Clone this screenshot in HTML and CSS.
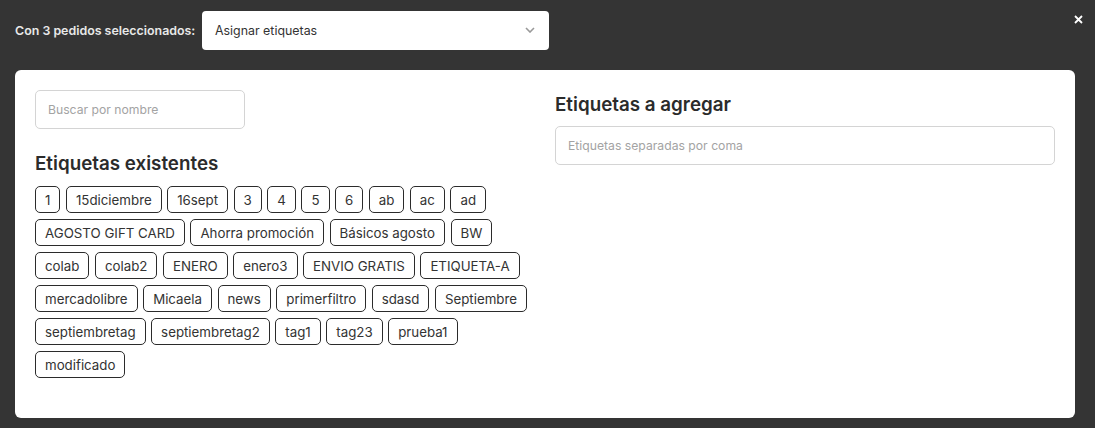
FILE: index.html
```html
<!DOCTYPE html>
<html lang="es">
<head>
<meta charset="utf-8">
<link rel="stylesheet" href="styles.css">
</head>
<body>
<div class="overlay">
  <div class="topbar">
    <span class="label">Con 3 pedidos seleccionados:</span>
    <div class="select">
      <span>Asignar etiquetas</span>
      <svg class="chev" width="10" height="6" viewBox="0 0 10 6"><path d="M1 1l4 4 4-4" fill="none" stroke="#999" stroke-width="1.6"/></svg>
    </div>
    <svg class="close" width="9" height="9" viewBox="0 0 9 9"><path d="M1 1l7 7M8 1l-7 7" stroke="#fff" stroke-width="1.8"/></svg>
  </div>
  <div class="card">
    <div class="col">
      <div class="input search">Buscar por nombre</div>
      <h2 class="h-exist">Etiquetas existentes</h2>
      <div class="tags">
        <span class="tag">1</span><span class="tag">15diciembre</span><span class="tag">16sept</span><span class="tag">3</span><span class="tag">4</span><span class="tag">5</span><span class="tag">6</span><span class="tag">ab</span><span class="tag">ac</span><span class="tag">ad</span>
        <span class="tag">AGOSTO GIFT CARD</span><span class="tag">Ahorra promoción</span><span class="tag">Básicos agosto</span><span class="tag">BW</span>
        <span class="tag">colab</span><span class="tag">colab2</span><span class="tag">ENERO</span><span class="tag">enero3</span><span class="tag">ENVIO GRATIS</span><span class="tag">ETIQUETA-A</span>
        <span class="tag">mercadolibre</span><span class="tag">Micaela</span><span class="tag">news</span><span class="tag">primerfiltro</span><span class="tag">sdasd</span><span class="tag">Septiembre</span>
        <span class="tag">septiembretag</span><span class="tag">septiembretag2</span><span class="tag">tag1</span><span class="tag">tag23</span><span class="tag">prueba1</span>
        <span class="tag">modificado</span>
      </div>
    </div>
    <div class="col">
      <h2 class="h-add">Etiquetas a agregar</h2>
      <div class="input">Etiquetas separadas por coma</div>
    </div>
  </div>
</div>
</body>
</html>
```

FILE: styles.css
```css
* { box-sizing: border-box; }
html, body { margin: 0; height: 100%; }
body {
  background: #343434;
  font-family: Inter, "Noto Sans", sans-serif;
  color: #2b2b2b;
}
.overlay { padding: 10px 20px 10px 15px; }
.topbar {
  display: flex;
  align-items: center;
  height: 40px;
  position: relative;
}
.label {
  color: #e8e8e8;
  font-size: 12.4px;
  font-weight: 600;
  width: 187px;
}
.select {
  width: 347px;
  height: 39px;
  background: #fff;
  border-radius: 4px;
  display: flex;
  align-items: center;
  justify-content: space-between;
  padding: 0 14px 0 13px;
  font-size: 12.4px;
  color: #333;
}
.close { position: absolute; right: -8px; top: 5px; }
.card {
  margin-top: 20px;
  background: #fff;
  border-radius: 6px;
  height: 348px;
  padding: 20px;
  display: grid;
  grid-template-columns: 1fr 1fr;
  column-gap: 20px;
}
.col { display: flex; flex-direction: column; }
.input {
  height: 39px;
  border: 1px solid #d4d4d4;
  border-radius: 5px;
  display: flex;
  align-items: center;
  padding: 0 12px;
  font-size: 12.2px;
  color: #a3a3a3;
}
.search { width: 210px; }
h2 {
  margin: 0;
  font-size: 18.8px;
  font-weight: 600;
  color: #2b2b2b;
}
.h-exist { margin-top: 23px; margin-bottom: 10px; line-height: 24px; }
.h-add { margin-top: 3px; margin-bottom: 9px; line-height: 24px; }
.tags {
  display: flex;
  flex-wrap: wrap;
  gap: 6px 5.5px;
}
.tag {
  height: 27px;
  border: 1px solid #2b2b2b;
  border-radius: 5px;
  padding: 0 9px;
  display: inline-flex;
  align-items: center;
  font-size: 13.3px;
  color: #333;
}
```
